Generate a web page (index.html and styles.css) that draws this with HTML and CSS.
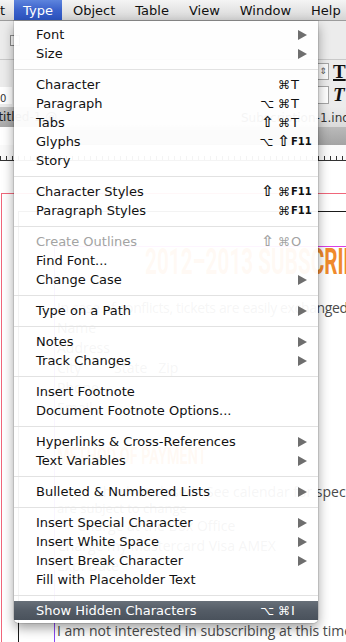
FILE: index.html
```html
<!DOCTYPE html>
<html lang="en">
<head>
    <meta charset="UTF-8">
    <meta name="viewport" content="width=device-width, initial-scale=1.0">
    <title>Type menu</title>
    <link rel="stylesheet" href="styles.css">
</head>
<body>
    <!-- Menu bar -->
    <div class="menubar">
        <span class="mb-item mb-edit">t</span>
        <span class="mb-item mb-active">Type</span>
        <span class="mb-item">Object</span>
        <span class="mb-item">Table</span>
        <span class="mb-item">View</span>
        <span class="mb-item">Window</span>
        <span class="mb-item">Help</span>
    </div>

    <!-- InDesign window behind the menu -->
    <div class="ctrl">
        <div class="ctrl-row ctrl-top">
            <span class="frame-ico"></span>
        </div>
        <div class="ctrl-row ctrl-mid">
            <div class="ctrl-side">
                <span class="spin">&#8661;</span>
                <span class="tt tt-bold">T</span>
            </div>
        </div>
        <div class="ctrl-row ctrl-low">
            <span class="field-left">0</span>
            <div class="ctrl-side">
                <span class="box"></span>
                <span class="tt tt-ital">T</span>
            </div>
        </div>
    </div>
    <div class="tabbar">
        <span class="tab-left">Untitled-1 @ 100%</span>
        <span class="tab-doc">Subscription-1.indd</span>
    </div>
    <div class="tabbar2">
        <span class="tab2-left"></span>
        <span class="tab2-right"></span>
    </div>
    <div class="ruler"></div>

    <div class="page">
        <div class="bleed">
            <div class="margin-frame">
                <div class="text-frame">
                    <div class="doc-title">2012&ndash;2013 SUBSCRIPTION</div>
                    <p class="doc-line doc-note">In case of conflicts, tickets are easily exchanged</p>
                    <p class="doc-line">Name</p>
                    <p class="doc-line">Address</p>
                    <p class="doc-line">City &nbsp; &nbsp; &nbsp; &nbsp; State &nbsp; Zip</p>
                    <p class="doc-line">Phone</p>
                    <p class="doc-line">Email</p>
                    <div class="doc-head">METHOD OF PAYMENT</div>
                    <p class="doc-line doc-pay">Check enclosed &nbsp; See calendar for special</p>
                    <p class="doc-line doc-small">are subject to change</p>
                    <p class="doc-line doc-office">Charge at the Box Office</p>
                    <p class="doc-line">Charge my Mastercard Visa AMEX</p>
                    <p class="doc-line">Exp. Date</p>
                    <p class="doc-line doc-last">I am not interested in subscribing at this time</p>
                    <p class="doc-line doc-end">please be added to our mailing list</p>
                </div>
            </div>
        </div>
    </div>

    <!-- Open Type menu -->
    <div class="menu">
        <div class="item"><span class="label">Font</span><span class="arrow"></span></div>
        <div class="item"><span class="label">Size</span><span class="arrow"></span></div>
        <div class="sep"></div>
        <div class="item"><span class="label">Character</span><span class="mods">&#8984;</span><span class="key">T</span></div>
        <div class="item"><span class="label">Paragraph</span><span class="mods">&#8997;&#8984;</span><span class="key">T</span></div>
        <div class="item"><span class="label">Tabs</span><span class="mods"><span class="shift">&#8679;</span>&#8984;</span><span class="key">T</span></div>
        <div class="item"><span class="label">Glyphs</span><span class="mods">&#8997;<span class="shift">&#8679;</span></span><span class="key key-f">F11</span></div>
        <div class="item"><span class="label">Story</span></div>
        <div class="sep"></div>
        <div class="item"><span class="label">Character Styles</span><span class="mods"><span class="shift">&#8679;</span>&#8984;</span><span class="key key-f">F11</span></div>
        <div class="item"><span class="label">Paragraph Styles</span><span class="mods">&#8984;</span><span class="key key-f">F11</span></div>
        <div class="sep"></div>
        <div class="item disabled"><span class="label">Create Outlines</span><span class="mods"><span class="shift">&#8679;</span>&#8984;</span><span class="key">O</span></div>
        <div class="item"><span class="label">Find Font...</span></div>
        <div class="item"><span class="label">Change Case</span><span class="arrow"></span></div>
        <div class="sep"></div>
        <div class="item"><span class="label">Type on a Path</span><span class="arrow"></span></div>
        <div class="sep"></div>
        <div class="item"><span class="label">Notes</span><span class="arrow"></span></div>
        <div class="item"><span class="label">Track Changes</span><span class="arrow"></span></div>
        <div class="sep"></div>
        <div class="item"><span class="label">Insert Footnote</span></div>
        <div class="item"><span class="label">Document Footnote Options...</span></div>
        <div class="sep"></div>
        <div class="item"><span class="label">Hyperlinks &amp; Cross-References</span><span class="arrow"></span></div>
        <div class="item"><span class="label">Text Variables</span><span class="arrow"></span></div>
        <div class="sep"></div>
        <div class="item"><span class="label">Bulleted &amp; Numbered Lists</span><span class="arrow"></span></div>
        <div class="sep"></div>
        <div class="item"><span class="label">Insert Special Character</span><span class="arrow"></span></div>
        <div class="item"><span class="label">Insert White Space</span><span class="arrow"></span></div>
        <div class="item"><span class="label">Insert Break Character</span><span class="arrow"></span></div>
        <div class="item"><span class="label">Fill with Placeholder Text</span></div>
        <div class="sep"></div>
        <div class="item selected"><span class="label">Show Hidden Characters</span><span class="mods">&#8997;&#8984;</span><span class="key">I</span></div>
    </div>
</body>
</html>
```

FILE: styles.css
```css
body {
    margin: 0;
    width: 346px;
    height: 642px;
    overflow: hidden;
    position: relative;
    background: #fff;
    font-family: "DejaVu Sans", sans-serif;
    font-size: 13px;
    color: #111;
}

/* menu bar */
.menubar {
    height: 21px;
    display: flex;
    align-items: stretch;
    white-space: nowrap;
    background: linear-gradient(#f4f4f4, #e2e2e2 60%, #d4d4d4);
    border-bottom: 1px solid #9c9c9c;
    box-sizing: border-box;
}

.mb-item {
    display: flex;
    align-items: center;
    padding: 0 10px;
    line-height: 21px;
}

.mb-edit {
    padding: 0 8px 0 0;
}

.mb-active {
    padding: 0 9px;
    margin: 0 1px;
    color: #fff;
    background: linear-gradient(#5d84dd, #3b62cb 50%, #2c54c0);
}

/* control panel */
.ctrl {
    background: #ececec;
    height: 86px;
}

.ctrl-row {
    display: flex;
    align-items: center;
    justify-content: space-between;
}

.ctrl-top {
    height: 38px;
    border-bottom: 1px solid #c9c9c9;
    padding-left: 10px;
}

.frame-ico {
    width: 8px;
    height: 9px;
    border: 1px solid #8a8a8a;
    background: #f7f7f7;
}

.ctrl-mid {
    height: 23px;
    justify-content: flex-end;
}

.ctrl-low {
    height: 24px;
}

.ctrl-side {
    display: flex;
    align-items: center;
    gap: 4px;
    width: 28px;
}

.spin {
    width: 10px;
    height: 15px;
    border: 1px solid #a5a5a5;
    border-left: none;
    background: #fafafa;
    font-size: 9px;
    line-height: 15px;
    color: #555;
    text-align: center;
}

.box {
    width: 10px;
    height: 16px;
    border: 1px solid #a5a5a5;
    border-left: none;
    background: #fff;
}

.tt {
    font-family: "Liberation Serif", serif;
    font-size: 19px;
    font-weight: bold;
    line-height: 18px;
}

.tt-bold {
    text-decoration: underline;
    text-decoration-thickness: 2px;
}

.tt-ital {
    font-style: italic;
}

.field-left {
    background: #fff;
    width: 12px;
    padding-top: 6px;
    font-size: 10px;
    color: #333;
}

.tabbar {
    height: 20px;
    display: flex;
    font-size: 12px;
    white-space: nowrap;
}

.tab-left {
    width: 60px;
    overflow: hidden;
    background: linear-gradient(#c5c5c5, #a9a9a9);
    color: #222;
    line-height: 20px;
    text-indent: -18px;
}

.tab-doc {
    flex: 1;
    overflow: hidden;
    padding-left: 181px;
    background: linear-gradient(#ececec, #dadada);
    color: #333;
    line-height: 22px;
}

.tabbar2 {
    height: 18px;
    display: flex;
}

.tab2-left {
    width: 60px;
    background: #fff;
}

.tab2-right {
    flex: 1;
    background: linear-gradient(#bababa, #a3a3a3);
}

.ruler {
    height: 15px;
    background:
        repeating-linear-gradient(90deg, #333 0 1px, transparent 1px 6px) bottom / 100% 4px no-repeat,
        #fafafa;
    border-bottom: 1px solid #333;
}

/* document page */
.page {
    height: 482px;
}

.bleed {
    margin: 32px 0 0 1px;
    height: 100%;
    border-top: 1px solid #f0667a;
    border-left: 1px solid #f0667a;
}

.margin-frame {
    margin: 17px 0 0 16px;
    height: 100%;
    border-top: 1px solid #1a1a1a;
    border-left: 1px solid #1a1a1a;
}

.text-frame {
    margin: 34px 0 0 35px;
    height: 100%;
    border-top: 1px solid #d93fe6;
    border-left: 1px solid #8a46f2;
    padding-left: 2px;
    font-family: "Open Sans", sans-serif;
    color: #4a4a4a;
    font-size: 14px;
    white-space: nowrap;
}

.doc-title {
    font-family: "Roboto", sans-serif;
    font-weight: bold;
    font-size: 37px;
    line-height: 30px;
    color: #f08a2c;
    transform: scaleX(0.56);
    transform-origin: left;
    margin-left: 88px;
}

.doc-line {
    margin: 0;
    line-height: 20px;
}

.doc-note {
    margin-top: 21px;
    letter-spacing: -0.35px;
}

.doc-head {
    margin-top: 25px;
    font-family: "Roboto", sans-serif;
    font-weight: bold;
    font-size: 24px;
    color: #f08a2c;
    transform: scaleX(0.6);
    transform-origin: left;
    line-height: 26px;
}

.doc-pay {
    margin-top: 13px;
    padding-left: 37px;
}

.doc-small {
    line-height: 12px;
    font-size: 13px;
}

.doc-office {
    margin-top: 2px;
    padding-left: 20px;
}

.doc-last {
    margin-top: 45px;
}

.doc-end {
    line-height: 14px;
}

/* the dropped menu */
.menu {
    position: absolute;
    left: 14px;
    top: 21px;
    width: 304px;
    padding: 4px 0 3px;
    background: rgba(255, 255, 255, 0.95);
    border-radius: 0 0 5px 5px;
    box-shadow: 0 0 0 1px rgba(0, 0, 0, 0.1), 0 5px 12px rgba(0, 0, 0, 0.38);
}

.item {
    display: flex;
    align-items: center;
    height: 19px;
    padding: 0 3px 0 22px;
    white-space: nowrap;
}

.label {
    flex: 1;
}

.mods {
    letter-spacing: 4px;
    margin-right: -3px;
    font-size: 12px;
}

.shift {
    font-size: 15px;
    font-weight: bold;
    line-height: 12px;
}

.key {
    width: 24px;
}

.key-f {
    font-size: 10px;
    font-weight: bold;
}

.arrow {
    width: 0;
    height: 0;
    border-left: 9px solid #6e6e6e;
    border-top: 5px solid transparent;
    border-bottom: 5px solid transparent;
    margin-right: 8px;
}

.sep {
    height: 12px;
    display: flex;
    align-items: center;
}

.sep::after {
    content: "";
    flex: 1;
    height: 1px;
    background: #e2e2e2;
}

.disabled {
    color: #a3a3a3;
}

.selected {
    color: #fff;
    background: linear-gradient(#687079, #545c66 50%, #4a525c);
}
```
